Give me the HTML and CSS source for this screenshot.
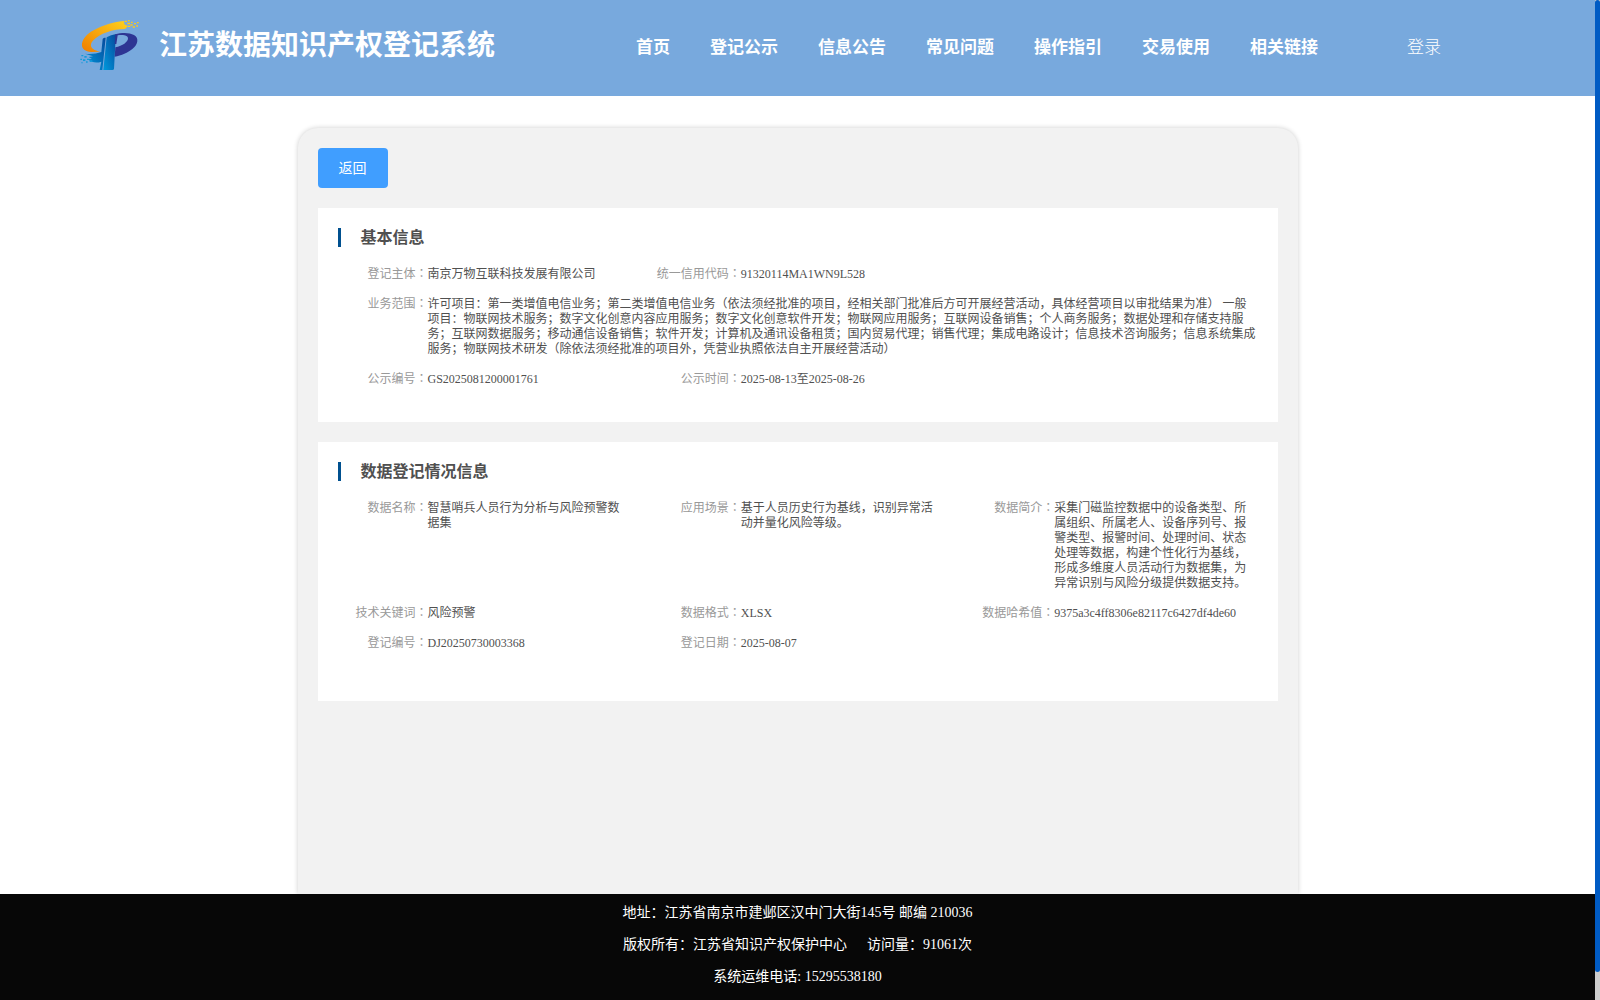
FILE: index.html
```html
<!DOCTYPE html>
<html lang="zh-CN">
<head>
    <meta charset="UTF-8">
    <meta name="viewport" content="width=device-width, initial-scale=1.0">
    <title>江苏数据知识产权登记系统</title>
    <link rel="stylesheet" href="styles.css">
</head>
<body>

<header class="header">
    <svg class="logo" viewBox="30 27 180 156" aria-hidden="true">
        <defs>
            <linearGradient id="gOrange" x1="0" y1="1" x2="1" y2="0">
                <stop offset="0" stop-color="#ef7d00"/><stop offset="1" stop-color="#ffd21c"/>
            </linearGradient>
            <linearGradient id="gBlue" x1="0" y1="1" x2="1" y2="0">
                <stop offset="0" stop-color="#0099dc"/><stop offset="1" stop-color="#06499c"/>
            </linearGradient>
        </defs>
        <path fill="url(#gOrange)" d="M162 33 C116 37 62 58 43 84 C29 105 35 124 64 126 L91 125 C62 119 56 106 70 91 C88 71 129 57 165 57 L174 48 L163 43 Z"/>
        <path fill="url(#gBlue)" d="M45 131 C65 134 80 130 94 126 L98 87 C99 84 103 83 107 83 L97 180 L89 180 L94 155 C80 160 65 158 54 148 L66 147 L56 141 L69 139 Z"/>
        <path fill="url(#gBlue)" d="M110 82 Q122 74 139 72 L136 103 L132 177 Q131 180 127 180 L100 180 Z"/>
        <path fill="#2e3593" d="M136 73 C155 67 178 67 192 75 C208 84 204 104 187 117 C174 128 154 137 134 140 L136 112 C158 108 174 96 174 85 C174 77 162 73 143 76 L139 102 L134 102 Z"/>
        <path fill="#fcc91e" d="M164 32h7v4h-7zM174 30h5v4h-5zM172 38h8v5h-8zM183 35h5v4h-5zM181 43h7v4h-7zM192 39h6v4h-6zM201 36h5v4h-5zM174 47h7v4h-7zM188 49h7v4h-7zM199 46h5v4h-5z"/>
        <path fill="#149bdb" d="M34 135h6v4h-6zM43 138h7v5h-7zM31 146h5v4h-5zM39 148h7v5h-7zM51 146h7v4h-7zM48 154h5v4h-5zM59 151h8v5h-8zM34 157h4v3h-4z"/>
    </svg>
    <h1 class="site-title">江苏数据知识产权登记系统</h1>
    <nav class="nav">
        <a href="#">首页</a>
        <a href="#">登记公示</a>
        <a href="#">信息公告</a>
        <a href="#">常见问题</a>
        <a href="#">操作指引</a>
        <a href="#">交易使用</a>
        <a href="#">相关链接</a>
    </nav>
    <a class="login" href="#">登录</a>
</header>

<main class="container">
    <button class="back" type="button">返回</button>

    <section class="card">
        <h2>基本信息</h2>
        <dl class="info">
            <div class="item"><dt>登记主体<span class="colon" lang="zh-TW">：</span></dt><dd>南京万物互联科技发展有限公司</dd></div>
            <div class="item item-2"><dt>统一信用代码<span class="colon" lang="zh-TW">：</span></dt><dd>91320114MA1WN9L528</dd></div>
            <div class="item item-3"><dt>业务范围<span class="colon" lang="zh-TW">：</span></dt><dd>许可项目：第一类增值电信业务；第二类增值电信业务（依法须经批准的项目，经相关部门批准后方可开展经营活动，具体经营项目以审批结果为准） 一般项目：物联网技术服务；数字文化创意内容应用服务；数字文化创意软件开发；物联网应用服务；互联网设备销售；个人商务服务；数据处理和存储支持服务；互联网数据服务；移动通信设备销售；软件开发；计算机及通讯设备租赁；国内贸易代理；销售代理；集成电路设计；信息技术咨询服务；信息系统集成服务；物联网技术研发（除依法须经批准的项目外，凭营业执照依法自主开展经营活动）</dd></div>
            <div class="item"><dt>公示编号<span class="colon" lang="zh-TW">：</span></dt><dd>GS2025081200001761</dd></div>
            <div class="item item-2"><dt>公示时间<span class="colon" lang="zh-TW">：</span></dt><dd>2025-08-13至2025-08-26</dd></div>
        </dl>
    </section>

    <section class="card card-data">
        <h2>数据登记情况信息</h2>
        <dl class="info">
            <div class="item"><dt>数据名称<span class="colon" lang="zh-TW">：</span></dt><dd>智慧哨兵人员行为分析与风险预警数据集</dd></div>
            <div class="item"><dt>应用场景<span class="colon" lang="zh-TW">：</span></dt><dd>基于人员历史行为基线，识别异常活动并量化风险等级。</dd></div>
            <div class="item"><dt>数据简介<span class="colon" lang="zh-TW">：</span></dt><dd>采集门磁监控数据中的设备类型、所属组织、所属老人、设备序列号、报警类型、报警时间、处理时间、状态处理等数据，构建个性化行为基线，形成多维度人员活动行为数据集，为异常识别与风险分级提供数据支持。</dd></div>
            <div class="item"><dt>技术关键词<span class="colon" lang="zh-TW">：</span></dt><dd>风险预警</dd></div>
            <div class="item"><dt>数据格式<span class="colon" lang="zh-TW">：</span></dt><dd>XLSX</dd></div>
            <div class="item"><dt>数据哈希值<span class="colon" lang="zh-TW">：</span></dt><dd>9375a3c4ff8306e82117c6427df4de60</dd></div>
            <div class="item"><dt>登记编号<span class="colon" lang="zh-TW">：</span></dt><dd>DJ20250730003368</dd></div>
            <div class="item"><dt>登记日期<span class="colon" lang="zh-TW">：</span></dt><dd>2025-08-07</dd></div>
        </dl>
    </section>
</main>

<footer class="footer">
    <p>地址：江苏省南京市建邺区汉中门大街145号 邮编 210036</p>
    <p>版权所有：江苏省知识产权保护中心<span class="visits">访问量：91061次</span></p>
    <p>系统运维电话: 15295538180</p>
</footer>

<div class="scrollbar"><div class="thumb"></div></div>

</body>
</html>
```

FILE: styles.css
```css
* { box-sizing: border-box; }
body { margin: 0; padding-right: 5px; min-height: 100vh; display: flex; flex-direction: column; background: #fff; color: #505050; font-family: "Liberation Serif", "Noto Sans CJK SC", serif; text-spacing-trim: space-all; }
a { color: inherit; text-decoration: none; }
h1, h2, p, dl, dd { margin: 0; }

.header { display: flex; align-items: center; height: 96px; padding: 0 154px 0 80px; background: #78a9dd; color: #fff; }
.logo { width: 60px; height: 52px; margin-bottom: 6px; flex: none; }
.site-title { margin: 0 auto 4px 19px; font-size: 28px; line-height: 40px; font-weight: bold; white-space: nowrap; }
.nav { display: flex; gap: 40px; font-size: 17px; line-height: 24px; font-weight: bold; white-space: nowrap; }
.login { margin-left: 89px; font-size: 17px; line-height: 24px; font-weight: 300; white-space: nowrap; }

.container { flex: 1; width: 100%; max-width: 1000px; margin: 32px auto 0; padding: 20px; background: #f2f2f2; border-radius: 20px 20px 0 0; box-shadow: 0 0 5px rgba(0,0,0,0.2); }
.back { display: block; width: 70px; height: 40px; margin-bottom: 20px; padding: 0 0 2px; border: none; border-radius: 4px; background: #409eff; color: #fff; font-family: inherit; font-size: 14px; cursor: pointer; }

.card { background: #fff; margin-bottom: 20px; padding: 20px 0 35px 20px; }
.card-data { padding-bottom: 50px; }
.card h2 { margin-bottom: 20px; padding-left: 20px; border-left: 3px solid #00508f; font-size: 16px; line-height: 19px; }
.info { display: grid; grid-template-columns: repeat(3, 1fr); row-gap: 15px; font-size: 12px; line-height: 15px; }
.item { display: flex; padding-right: 20px; }
.item-2 { grid-column: span 2; }
.item-3 { grid-column: span 3; }
dt { flex: none; width: 90px; text-align: right; color: #999; white-space: nowrap; }
.colon { font-family: "Noto Sans CJK TC", sans-serif; line-height: 1; }
dd { flex: 1; min-width: 0; }

.footer { position: relative; padding: 3px 0 7px; background: #070707; color: #fff; font-size: 14px; line-height: 32px; text-align: center; }
.visits { margin-left: 20px; }

.scrollbar { position: fixed; top: 0; right: 0; bottom: 0; width: 5px; background: #ccc; }
.thumb { height: 97.2%; border-radius: 3px; background: #005bc4; }
```
